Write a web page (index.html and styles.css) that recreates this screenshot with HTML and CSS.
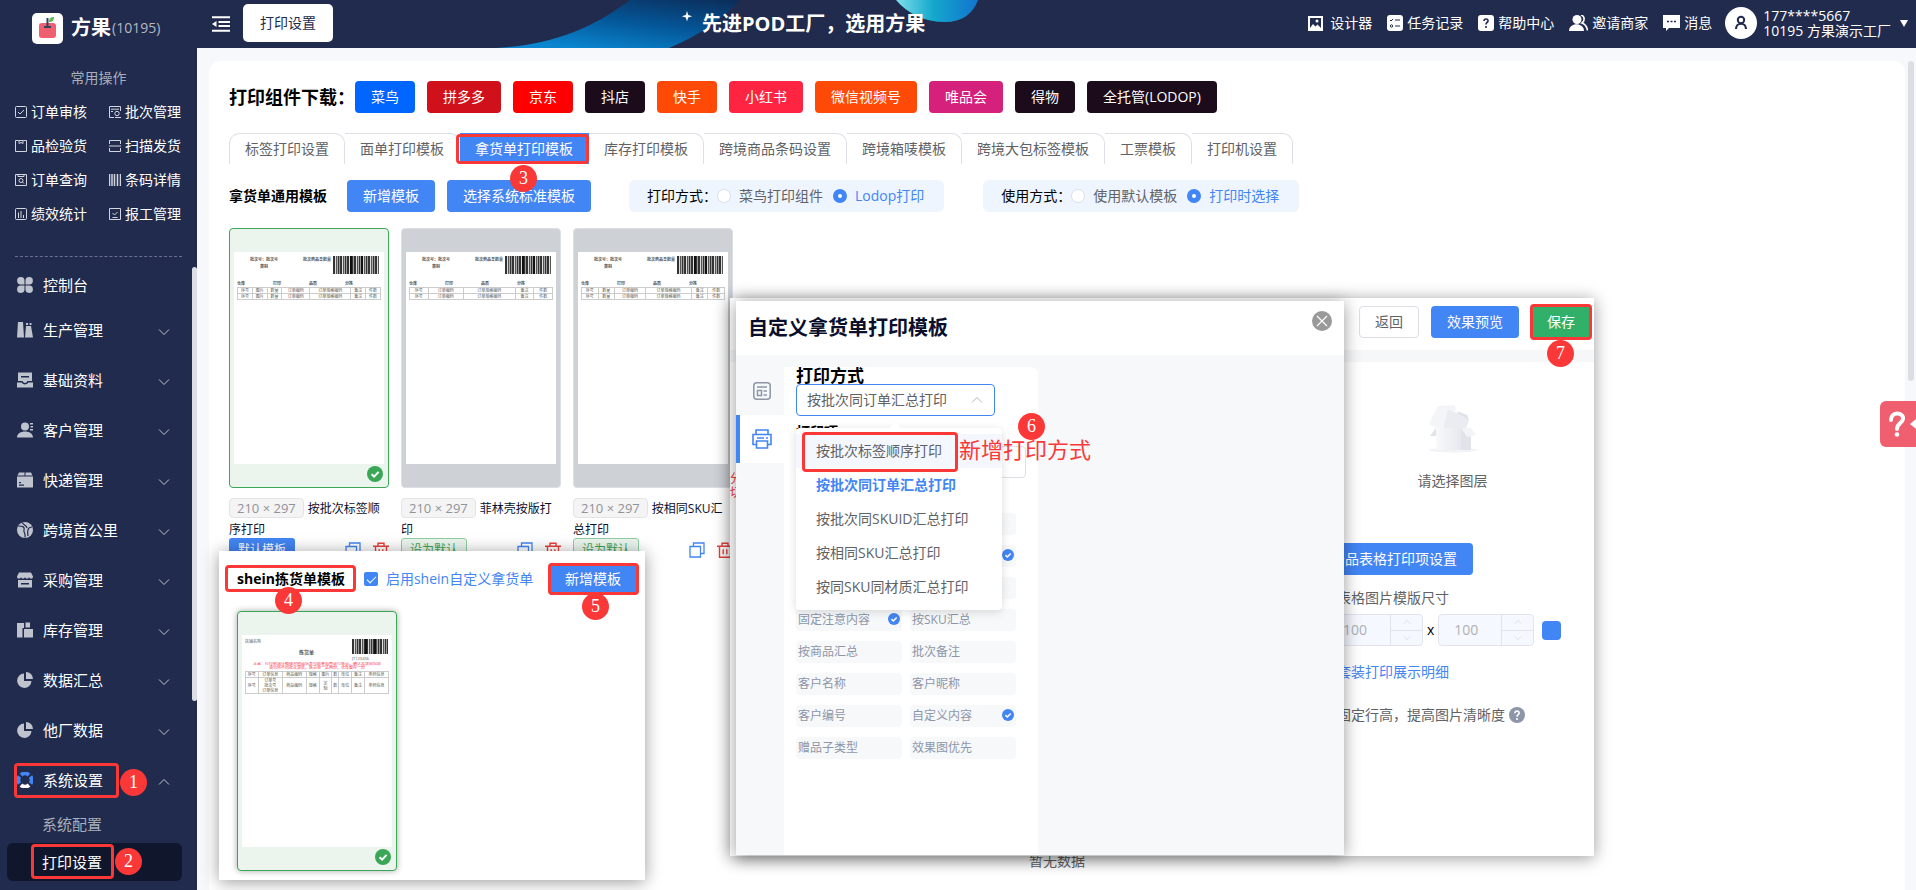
FILE: index.html
```html
<!DOCTYPE html>
<html lang="zh-CN">

<head>
    <meta charset="utf-8">
    <title>打印设置</title>
    <link rel="stylesheet" href="styles.css">
</head>

<body>

    <!-- 图标 -->
    <svg width="0" height="0" class="defs">
        <symbol id="i-down" viewBox="0 0 12 12"><path d="M1 3.5l5 5 5-5" fill="none" stroke="currentColor"/></symbol>
        <symbol id="i-up" viewBox="0 0 12 12"><path d="M1 8.5l5-5 5 5" fill="none" stroke="currentColor"/></symbol>
        <symbol id="i-check" viewBox="0 0 16 16"><circle cx="8" cy="8" r="8" fill="currentColor"/><path d="M4.6 8.2l2.5 2.4 4.5-4.7" fill="none" stroke="#fff" stroke-width="2"/></symbol>
        <symbol id="i-copy" viewBox="0 0 16 16"><path d="M1 4.5h10.500v10.500H1zM4.500 4.500V1H15v10.500h-3.500" fill="none" stroke="currentColor" stroke-width="1.300"/></symbol>
        <symbol id="i-trash" viewBox="0 0 16 16"><path d="M0 4.300h16M5 4V1.200h6V4M2.500 4.500v10.700h11V4.500M6.200 7.300v5M9.800 7.300v5" fill="none" stroke="currentColor" stroke-width="1.400"/></symbol>
        <symbol id="i-pie" viewBox="0 0 16 16"><path d="M7 1.500A7.200 7.200 0 1 0 14.500 9H7z" fill="currentColor"/><path d="M9 0a7 7 0 0 1 7 7H9z" fill="currentColor"/></symbol>
    </svg>

    <div class="sidebar">
        <div class="logo">
            <svg width="31" height="31" viewBox="0 0 31 31"><rect width="31" height="31" rx="5" fill="#fff"/><rect x="7" y="10" width="17" height="15" rx="3" fill="#ef5f70"/><path d="M15.500 5v9M12 14h7" stroke="#34405c" stroke-width="2" fill="none"/><path d="M17 9c0-4 2-5 5-5 0 4-2 5-5 5z" fill="#62b84e"/></svg>
            <b>方果</b><span>(10195)</span>
        </div>
        <div class="often-title">常用操作</div>
        <div class="often">
            <a href="#"><svg viewBox="0 0 12 12"><rect x=".5" y=".5" width="11" height="11" rx="1"/><path d="M3 6l2 2 4-4"/></svg>订单审核</a>
            <a href="#"><svg viewBox="0 0 12 12"><path d="M5 11.500H.500V.500h11V5M2 3.200h8M2 5.500h2"/><circle cx="8" cy="7.500" r="2.200"/><path d="M6 11.500h6"/></svg>批次管理</a>
            <a href="#"><svg viewBox="0 0 12 12"><path d="M3.500.5h-3v11h11V.500h-3M3.500.5h5M4 .500v3l2-1 2 1v-3"/></svg>品检验货</a>
            <a href="#"><svg viewBox="0 0 12 12"><path d="M.500 4V.500h11V4M.500 8v3.500h11V8M0 6h12"/></svg>扫描发货</a>
            <a href="#"><svg viewBox="0 0 12 12"><path d="M.500.5h11v11H.500zM3 .500v2h6v-2"/><circle cx="6" cy="6.500" r="2"/><path d="M7.500 8l1.500 1.500"/></svg>订单查询</a>
            <a href="#"><svg viewBox="0 0 12 12"><path d="M.500 0v12M3 0v12M5.500 0v12M8.500 0v12M11.500 0v12" stroke-width="1.500"/></svg>条码详情</a>
            <a href="#"><svg viewBox="0 0 12 12"><rect x=".5" y=".5" width="11" height="11" rx="1"/><path d="M3.500 4.500V10M6 3v7M8.500 7v3"/></svg>绩效统计</a>
            <a href="#"><svg viewBox="0 0 12 12"><path d="M7 .500H.500v11h11V.500H7M3.500 5l2 2 3-3M3.500 9.500h5"/></svg>报工管理</a>
        </div>
        <div class="menu">
            <a href="#" class="item first"><svg viewBox="0 0 16 16"><path d="M7.500 7.500H4A3.700 3.700 0 1 1 7.500 4zM8.500 7.500V4A3.700 3.700 0 1 1 12 7.500zM7.500 8.500V12A3.700 3.700 0 1 1 4 8.500zM8.500 8.500H12A3.700 3.700 0 1 1 8.500 12z"/></svg>控制台</a>
            <a href="#" class="item"><svg viewBox="0 0 16 16"><path d="M1 0h5l1 15.500H0zM9 4h5l2 11.500H8zM9 1h2v2H9zM12.500 1h2v2h-2z"/></svg>生产管理<svg class="arrow"><use href="#i-down"/></svg></a>
            <a href="#" class="item"><svg viewBox="0 0 16 16"><path fill-rule="evenodd" d="M1 .500h14V9h-4.500c-1 2.600-4 2.600-5 0H1zM4 4v1.500h8V4zM0 10.500h4.500c2 2.600 5 2.600 7 0H16v5H0z"/></svg>基础资料<svg class="arrow"><use href="#i-down"/></svg></a>
            <a href="#" class="item"><svg viewBox="0 0 16 16"><circle cx="8" cy="4.500" r="4"/><path d="M0 15.500c0-8 16-8 16 0zM13 1h3v1.500h-3zM13.500 4H16v1.500h-2.500zM13 7h3v1.500h-3z"/></svg>客户管理<svg class="arrow"><use href="#i-down"/></svg></a>
            <a href="#" class="item"><svg viewBox="0 0 16 16"><path fill-rule="evenodd" d="M2 .500h5.500v3H.500zM8.500.5H14l1.500 3h-7zM0 4.500h16v11H0zM2 10v1.300h2V10zM2 12.500v1.300h5v-1.300z"/></svg>快递管理<svg class="arrow"><use href="#i-down"/></svg></a>
            <a href="#" class="item"><svg viewBox="0 0 16 16"><circle cx="8" cy="8" r="8"/><path d="M1 4c5 0 7 1 6 4-1 2 2 3 1 7.500M5 .500c2 3 5 3 5 5.500M15 5c-4 0-5 3-4 9" fill="none" stroke="#212b4d" stroke-width="1.200"/></svg>跨境首公里<svg class="arrow"><use href="#i-down"/></svg></a>
            <a href="#" class="item"><svg viewBox="0 0 16 16"><path fill-rule="evenodd" d="M2 .500h12l2 4c0 2.800-3.500 2.800-4 .5-.500 2.300-3.500 2.300-4 0-.500 2.300-3.500 2.300-4 0-.500 2.300-4 2.300-4-.500zM1 8h14v7.500H1zM4 11v1.500h8V11z"/></svg>采购管理<svg class="arrow"><use href="#i-down"/></svg></a>
            <a href="#" class="item"><svg viewBox="0 0 16 16"><path d="M0 1h7v5H5.500v9.500H0zM8.500.5H13v5H8.500zM7 7h9v8.500H7z"/></svg>库存管理<svg class="arrow"><use href="#i-down"/></svg></a>
            <a href="#" class="item"><svg><use href="#i-pie"/></svg>数据汇总<svg class="arrow"><use href="#i-down"/></svg></a>
            <a href="#" class="item"><svg><use href="#i-pie"/></svg>他厂数据<svg class="arrow"><use href="#i-down"/></svg></a>
            <a href="#" class="item"><svg viewBox="0 0 16 16"><g fill="none" stroke="#4285f4" stroke-width="4"><path d="M4 3a6 6 0 0 1 8 0M2.500 11.500a6 6 0 0 1 0-7M13.500 4.500a6 6 0 0 1 0 7"/><path d="M4 13a6 6 0 0 0 8 0" stroke="#fff"/></g></svg>系统设置<svg class="arrow"><use href="#i-up"/></svg><i class="frame frame-1"></i><i class="num num-1">1</i></a>
            <a href="#" class="sub">系统配置</a>
            <a href="#" class="sub active">打印设置<i class="frame frame-2"></i><i class="num num-2">2</i></a>
        </div>
        <div class="side-thumb"></div>
    </div>

    <div class="right">
        <div class="header">
            <svg class="banner" width="520" height="48" viewBox="0 0 520 48">
                <defs>
                    <linearGradient id="g1" x1="1" y1="0" x2="0.300" y2="1"><stop offset="0" stop-color="#0c2c58"/><stop offset=".5" stop-color="#045596"/><stop offset="1" stop-color="#0a86d0"/></linearGradient>
                    <linearGradient id="g2" x1="0" y1="0" x2="1" y2="0"><stop offset="0" stop-color="#7ee0ea"/><stop offset=".45" stop-color="#14a8cc"/><stop offset="1" stop-color="#1273cf"/></linearGradient>
                </defs>
                <path d="M36 48C90 45 130 30 170 0H280C262 20 240 35 209 48z" fill="url(#g1)"/>
                <path d="M436 0C448 14 464 22 485 22 502 22 513 14 518 0z" fill="url(#g2)"/>
                <path d="M227 11l1.200 4 4 1.200-4 1.200-1.200 4-1.200-4-4-1.200 4-1.200z" fill="#fff"/>
            </svg>
            <button class="fold" aria-label="收起菜单"><svg width="18" height="16" viewBox="0 0 18 16"><path d="M0 1.200h18M6.500 6h11.500M6.500 10h11.500M0 14.800h18" stroke="#fff" stroke-width="2"/><path d="M0 8l4.500-3v6z" fill="#fff"/></svg></button>
            <a href="#" class="page-tab">打印设置</a>
            <div class="slogan">先进POD工厂，选用方果</div>
            <div class="tools">
                <a href="#" class="designer"><svg width="15" height="15" viewBox="0 0 15 15"><path fill-rule="evenodd" d="M0 0h15v15H0zM2 2v10l3-4 2.500 2.500 2-2L13 12V2z" fill="#fff"/><circle cx="9" cy="5" r="1.500" fill="#fff"/></svg>设计器</a>
                <a href="#"><svg width="16" height="16" viewBox="0 0 16 16"><rect width="16" height="16" rx="3" fill="#fff"/><path d="M8 5h5M8 11h5M3 5l1 1 2-2" stroke="#212b4d" fill="none"/><circle cx="4.500" cy="11" r="1.200" stroke="#212b4d" fill="none"/></svg>任务记录</a>
                <a href="#"><svg width="16" height="16" viewBox="0 0 16 16"><rect width="16" height="16" rx="3" fill="#fff"/><path d="M6 6c0-3 4.500-2.500 4 0-.300 1.500-2 1.500-2 3.500M8 11v2" stroke="#212b4d" stroke-width="1.600" fill="none"/></svg>帮助中心</a>
                <a href="#"><svg width="19" height="16" viewBox="0 0 19 16"><circle cx="8" cy="4.500" r="4.500" fill="#fff"/><path d="M0 16c0-9 15-9 15 0z" fill="#fff"/><path d="M12 0c4 1 4 6 1 8 3 1 5 4 5.500 7.500" stroke="#fff" stroke-width="1.600" fill="none"/></svg>邀请商家</a>
                <a href="#"><svg width="17" height="16" viewBox="0 0 17 16"><path d="M0 0h17v13H6l-3 3v-3H0z" fill="#fff"/><path d="M4 6.500h2M7.500 6.500h2M11 6.500h2" stroke="#212b4d" stroke-width="1.500"/></svg>消息</a>
            </div>
            <div class="user">
                <svg width="32" height="32" viewBox="0 0 32 32"><circle cx="16" cy="16" r="16" fill="#fff"/><circle cx="16" cy="13" r="3.200" fill="none" stroke="#212b4d" stroke-width="2"/><path d="M11 22c0-7 10-7 10 0" fill="none" stroke="#212b4d" stroke-width="2.200"/></svg>
                <div>177****5667<br>10195 方果演示工厂</div>
                <svg class="caret" width="8" height="7" viewBox="0 0 8 7"><path d="M0 0h8L4 7z" fill="#fff"/></svg>
            </div>
        </div>

        <div class="content">
            <div class="downloads">
                <h1>打印组件下载：</h1>
                <button class="btn cainiao">菜鸟</button>
                <button class="btn pdd">拼多多</button>
                <button class="btn jd">京东</button>
                <button class="btn dark">抖店</button>
                <button class="btn orange">快手</button>
                <button class="btn xhs">小红书</button>
                <button class="btn orange">微信视频号</button>
                <button class="btn vip">唯品会</button>
                <button class="btn dark">得物</button>
                <button class="btn dark">全托管(LODOP)</button>
            </div>

            <div class="tabs">
                <a href="#">标签打印设置</a>
                <a href="#" class="plain">面单打印模板</a>
                <a href="#" class="on">拿货单打印模板<i class="frame"></i><i class="num num-3">3</i></a>
                <a href="#">库存打印模板</a>
                <a href="#">跨境商品条码设置</a>
                <a href="#">跨境箱唛模板</a>
                <a href="#">跨境大包标签模板</a>
                <a href="#">工票模板</a>
                <a href="#">打印机设置</a>
            </div>

            <div class="options">
                <h2>拿货单通用模板</h2>
                <button class="btn">新增模板</button>
                <button class="btn">选择系统标准模板</button>
                <div class="radios">
                    打印方式：
                    <label><input type="radio" name="way">菜鸟打印组件</label>
                    <label><input type="radio" name="way" checked>Lodop打印</label>
                </div>
                <div class="radios">
                    使用方式：
                    <label><input type="radio" name="use">使用默认模板</label>
                    <label><input type="radio" name="use" checked>打印时选择</label>
                </div>
            </div>

            <div class="cards">
                <div class="card">
                    <div class="thumb chosen">
                        <div class="paper">
                            <div class="paper-top"><span>批次号：批次号<br>类别</span><span>批次商品总数量</span><i class="barcode"></i></div>
                            <div class="paper-cols"><b>仓库</b><b>打印</b><b>品质</b><b>分拣</b></div>
                            <table>
                                <tr><td>序号</td><td>图片</td><td>数量</td><td>订单编码</td><td>订单规格编码</td><td>备注</td><td>件数</td></tr>
                                <tr><td>序号</td><td>图片</td><td>数量</td><td>订单编码</td><td>订单规格编码</td><td>备注</td><td>件数</td></tr>
                            </table>
                        </div>
                        <svg class="ok"><use href="#i-check"/></svg>
                    </div>
                    <div class="name"><span class="size">210 × 297</span>按批次标签顺序打印</div>
                    <div class="acts"><button class="mini">默认模板</button><svg class="copy"><use href="#i-copy"/></svg><svg class="trash"><use href="#i-trash"/></svg></div>
                </div>
                <div class="card">
                    <div class="thumb">
                        <div class="paper">
                            <div class="paper-top"><span>批次号：批次号<br>类别</span><span>批次商品总数量</span><i class="barcode"></i></div>
                            <div class="paper-cols"><b>仓库</b><b>打印</b><b>品质</b><b>分拣</b></div>
                            <table>
                                <tr><td>序号</td><td>订单编码</td><td>订单规格编码</td><td>备注</td><td>件数</td></tr>
                                <tr><td>序号</td><td>订单编码</td><td>订单规格编码</td><td>备注</td><td>件数</td></tr>
                            </table>
                        </div>
                    </div>
                    <div class="name"><span class="size">210 × 297</span>菲林壳按版打印</div>
                    <div class="acts"><button class="mini green">设为默认</button><svg class="copy"><use href="#i-copy"/></svg><svg class="trash"><use href="#i-trash"/></svg></div>
                </div>
                <div class="card">
                    <div class="thumb">
                        <div class="paper">
                            <div class="paper-top"><span>批次号：批次号<br>类别</span><span>批次商品总数量</span><i class="barcode"></i></div>
                            <div class="paper-cols"><b>仓库</b><b>打印</b><b>品质</b><b>分拣</b></div>
                            <table>
                                <tr><td>序号</td><td>数量</td><td>订单编码</td><td>订单规格编码</td><td>备注</td><td>件数</td></tr>
                                <tr><td>序号</td><td>数量</td><td>订单编码</td><td>订单规格编码</td><td>备注</td><td>件数</td></tr>
                            </table>
                        </div>
                    </div>
                    <div class="name"><span class="size">210 × 297</span>按相同SKU汇总打印</div>
                    <div class="acts"><button class="mini green">设为默认</button><svg class="copy"><use href="#i-copy"/></svg><svg class="trash"><use href="#i-trash"/></svg></div>
                </div>
            </div>

            <div class="nodata">暂无数据</div>
        </div>
        <div class="page-thumb"></div>
    </div>

    <!-- shein 模板 -->
    <div class="win shein">
        <div class="shein-head">
            <h2>shein拣货单模板<i class="frame frame-4"></i><i class="num num-4">4</i></h2>
            <label><input type="checkbox" checked>启用shein自定义拿货单</label>
            <button class="btn">新增模板<i class="frame"></i><i class="num num-5">5</i></button>
        </div>
        <div class="thumb chosen raised">
            <div class="paper">
                <div class="shein-top"><span>店铺名称</span><b>拣货单</b><div><i class="barcode"></i>JT123456</div></div>
                <p>注意：打印前请仔细核对商品信息与数量后再进行拣货，确认无误后包装<br>请勿将不同批次混装，拣货单一式两份，仓库留存一份</p>
                <table>
                    <tr><td>序号</td><td>订单信息</td><td>商品编码</td><td>规格</td><td>图片</td><td>数</td><td>库位</td><td>备注</td><td>条码信息</td></tr>
                    <tr><td>序号</td><td>订单号<br>批次号<br>订单信息</td><td>商品编码</td><td>规格</td><td>定<br>制</td><td>数</td><td>库位</td><td>备注</td><td>条码信息</td></tr>
                </table>
            </div>
            <svg class="ok"><use href="#i-check"/></svg>
        </div>
    </div>

    <!-- 模板编辑 -->
    <div class="win editor">
        <div class="editor-head">
            <button class="btn white">返回</button>
            <button class="btn">效果预览</button>
            <button class="btn save">保存<i class="frame"></i><i class="num num-7">7</i></button>
        </div>
        <div class="editor-body">
            <div class="warn">分<br>切</div>
            <div class="props">
                <div class="empty">
                    <svg width="50" height="50" viewBox="0 0 50 50">
                        <defs><linearGradient id="g3"><stop offset="0" stop-color="#f8f9fb"/><stop offset="1" stop-color="#e6e8ee"/></linearGradient></defs>
                        <ellipse cx="25" cy="46" rx="24" ry="2.500" fill="#f2f3f7"/>
                        <path d="M10 2l16-1 2 4-10 19H8l-7-4z" fill="#f4f5f8"/>
                        <path d="M20 6l10 3 7 2 4 6-4 9-6 4H14z" fill="#eaecf1"/><path d="M29 7l10 4 2 5-10-6z" fill="#dfe2e8"/>
                        <path d="M8 24v8H2z" fill="#e1e3e9"/><path d="M8 24h26v22H8z" fill="url(#g3)"/>
                        <path d="M33 24h10v22H33z" fill="#e0e3e9"/><path d="M33 24h10l5 7-9 2z" fill="#f3f4f8"/>
                    </svg>
                    <div>请选择图层</div>
                </div>
                <button class="btn">产品表格打印项设置</button>
                <div class="prop">表格图片模版尺寸</div>
                <div class="sizes">
                    <div class="stepper"><input type="text" value="100" aria-label="宽" disabled><div><button disabled aria-label="增加"><svg><use href="#i-up"/></svg></button><button disabled aria-label="减少"><svg><use href="#i-down"/></svg></button></div></div>
                    x
                    <div class="stepper"><input type="text" value="100" aria-label="高" disabled><div><button disabled aria-label="增加"><svg><use href="#i-up"/></svg></button><button disabled aria-label="减少"><svg><use href="#i-down"/></svg></button></div></div>
                    <i class="swatch"></i>
                </div>
                <div class="prop blue">套装打印展示明细</div>
                <div class="prop last">固定行高，提高图片清晰度<svg width="16" height="16" viewBox="0 0 16 16"><circle cx="8" cy="8" r="8" fill="#8d96a8"/><path d="M5.800 6.300c0-3.200 4.700-2.800 4.300 0C9.800 7.800 8 7.800 8 9.800M8 11v2" stroke="#fff" stroke-width="1.600" fill="none"/></svg></div>
            </div>
        </div>
    </div>

    <div class="win custom">
        <div class="custom-head">
            <h1>自定义拿货单打印模板</h1>
            <button aria-label="关闭"><svg width="20" height="20" viewBox="0 0 20 20"><circle cx="10" cy="10" r="10" fill="#999"/><path d="M5 5l10 10M15 5L5 15" stroke="#fff" stroke-width="1.200"/></svg></button>
        </div>
        <div class="custom-body">
            <div class="icons">
                <a href="#"><svg width="18" height="18" viewBox="0 0 18 18" fill="none" stroke="#8d96a8" stroke-width="1.500"><rect x=".8" y=".8" width="16.400" height="16.400" rx="3"/><path d="M4 5h10M4.500 8.500h4v5h-4zM10.500 9H14M10.500 13H14"/></svg></a>
                <a href="#" class="on"><svg width="20" height="20" viewBox="0 0 20 20" fill="none" stroke="#4285f4" stroke-width="1.600"><path d="M4 5.500V1h12v4.500M4.500 15.500H1v-10h18v10h-3.500M4.500 12h11v7h-11zM5 9h7M14 9h2"/></svg></a>
            </div>
            <div class="form">
                <h2>打印方式</h2>
                <button class="select">按批次同订单汇总打印<svg><use href="#i-up"/></svg></button>
                <h3>打印项</h3>
                <div class="search"></div>
                <div class="fields">
                    <span></span><span></span>
                    <span></span><span><svg><use href="#i-check"/></svg></span>
                    <span></span><span></span>
                    <span>固定注意内容<svg><use href="#i-check"/></svg></span><span>按SKU汇总</span>
                    <span>按商品汇总</span><span>批次备注</span>
                    <span>客户名称</span><span>客户昵称</span>
                    <span>客户编号</span><span>自定义内容<svg><use href="#i-check"/></svg></span>
                    <span>赠品子类型</span><span>效果图优先</span>
                </div>
                <ul class="dropdown">
                    <li class="hover">按批次标签顺序打印<i class="frame frame-6"></i><em>新增打印方式</em><i class="num num-6">6</i></li>
                    <li class="picked">按批次同订单汇总打印</li>
                    <li>按批次同SKUID汇总打印</li>
                    <li>按相同SKU汇总打印</li>
                    <li>按同SKU同材质汇总打印</li>
                </ul>
            </div>
        </div>
    </div>

    <button class="help" aria-label="帮助">
        <svg width="36" height="46" viewBox="0 0 36 46"><path d="M11 19c0-9 13-8 12-1-.500 4-6 4.500-6 10" fill="none" stroke="#fff" stroke-width="4" stroke-linecap="round"/><circle cx="17" cy="33.500" r="2.300" fill="#fff"/><path d="M30 23l6-5v10z" fill="#fff"/></svg>
    </button>

</body>

</html>
```

FILE: styles.css
```css
* {
    box-sizing: border-box;
}
html, body {
    height: 100%;
}
body {
    margin: 0;
    display: flex;
    position: relative;
    overflow: hidden;
    background: #f6f8fc;
    font-family: "Open Sans", "Noto Sans CJK SC", sans-serif;
    font-size: 14px;
    line-height: 20px;
    color: #000;
}
a {
    color: inherit;
    text-decoration: none;
}
button, input {
    font: inherit;
    margin: 0;
}
button {
    border: 0;
    padding: 0;
    background: none;
}
h1, h2, h3, p, ul {
    margin: 0;
    padding: 0;
}
i, em {
    font-style: normal;
}
svg {
    flex: none;
}
.defs {
    position: absolute;
}

/* 红框和序号 */
.frame {
    position: absolute;
    inset: -2px;
    border: 3px solid #fb3838;
    border-radius: 4px;
}
.num {
    position: absolute;
    z-index: 5;
    width: 27px;
    height: 27px;
    border-radius: 50%;
    background: #fb3838;
    color: #fff;
    font: 18px/27px "Liberation Serif", serif;
    text-align: center;
}

/* 左侧菜单 */
.sidebar {
    position: relative;
    flex: none;
    width: 197px;
    background: #212b4d;
    color: #fff;
}
.logo {
    display: flex;
    align-items: center;
    height: 48px;
    padding: 8px 0 0 32px;
}
.logo b {
    margin-left: 8px;
    font-size: 20px;
}
.logo span {
    margin-left: 1px;
    font-size: 14px;
    color: #b4b8c4;
}
.often-title {
    margin-top: 20px;
    text-align: center;
    color: #a9aebb;
}
.often {
    display: grid;
    grid-template-columns: 94px 1fr;
    margin: 7px 15px 0;
    padding-bottom: 25px;
    border-bottom: 1px dashed #6a7290;
}
.often a {
    display: flex;
    align-items: center;
    gap: 4px;
    height: 34px;
    white-space: nowrap;
}
.often svg {
    width: 12px;
    height: 12px;
    fill: none;
    stroke: #d3d6de;
}
.menu {
    padding-top: 8px;
    font-size: 15px;
}
.item {
    position: relative;
    display: flex;
    align-items: center;
    gap: 10px;
    height: 50px;
    padding: 0 27px 0 17px;
}
.first {
    height: 40px;
}
.item svg {
    width: 16px;
    height: 16px;
    color: #bfc3ce;
    fill: #bfc3ce;
}
.item .arrow {
    width: 12px;
    height: 12px;
    margin: 4px 0 0 auto;
}
.sub {
    position: relative;
    display: block;
    height: 38px;
    margin: 0 15px 0 7px;
    padding-left: 35px;
    line-height: 38px;
    color: #a9aebb;
}
.sub.active {
    border-radius: 6px;
    background: #10162c;
    color: #fff;
}
.side-thumb {
    position: absolute;
    top: 30%;
    right: 0;
    width: 5px;
    height: 434px;
    border-radius: 3px;
    background: #dcdee7;
}
.frame-1 {
    inset: 8px 78px 7px 14px;
}
.num-1 {
    left: 120px;
    top: 14px;
}
.frame-2 {
    inset: 1px 68px 2px 24px;
}
.num-2 {
    left: 108px;
    top: 5px;
}

/* 顶部 */
.right {
    position: relative;
    flex: 1;
    display: flex;
    flex-direction: column;
    min-width: 0;
}
.header {
    position: relative;
    flex: none;
    display: flex;
    align-items: center;
    height: 48px;
    padding: 0 8px 0 15px;
    background: #212b4d;
    color: #fff;
}
.banner {
    position: absolute;
    left: 263px;
    top: 0;
}
.fold {
    height: 16px;
    line-height: 0;
}
.page-tab {
    margin: -2px 0 0 13px;
    padding: 9px 17px;
    border-radius: 5px;
    background: #fff;
    color: #212b4d;
}
.slogan {
    position: relative;
    margin-left: 369px;
    font-size: 20px;
    font-weight: bold;
    line-height: 24px;
}
.tools {
    display: flex;
    gap: 15px;
    margin: -2px 0 0 auto;
}
.tools a {
    display: flex;
    align-items: center;
    gap: 4px;
}
.tools .designer {
    gap: 7px;
}
.user {
    display: flex;
    align-items: center;
    margin: -2px 0 0 13px;
    line-height: 15px;
}
.user div {
    margin-left: 6px;
}
.caret {
    margin-left: 9px;
}

/* 内容 */
.content {
    flex: 1;
    margin: 13px 11px 0 12px;
    padding: 20px;
    border-radius: 12px 12px 0 0;
    background: #fff;
    overflow: hidden;
}
.page-thumb {
    position: absolute;
    top: 61px;
    right: 2px;
    width: 6px;
    height: 320px;
    border-radius: 3px;
    background: #dddee3;
}
.downloads {
    display: flex;
    align-items: center;
    gap: 12px;
}
.downloads h1 {
    width: 114px;
    font-size: 18px;
    white-space: nowrap;
}
.btn {
    position: relative;
    height: 32px;
    padding: 0 16px;
    border-radius: 4px;
    background: #4285f4;
    color: #fff;
    white-space: nowrap;
}
.cainiao { background: #0066ff; }
.pdd { background: #d0111b; }
.jd { background: #ff0000; }
.dark { background: #1c0b1a; }
.orange { background: #ff4906; }
.xhs { background: #ff2442; }
.vip { background: #d6217c; }
.save { background: #30b068; }
.white {
    border: 1px solid #dcdfe6;
    padding: 0 15px;
    background: #fff;
    color: #606266;
}
.tabs {
    display: flex;
    width: max-content;
    margin-top: 20px;
    border-left: 1px solid #dcdfe6;
    border-radius: 10px 0 0 0;
    color: #606266;
}
.tabs a {
    position: relative;
    height: 31px;
    padding: 0 15px;
    border-top: 1px solid #dcdfe6;
    border-right: 1px solid #dcdfe6;
    border-radius: 0 10px 0 0;
    line-height: 30px;
}
.tabs a:first-child {
    border-radius: 10px 10px 0 0;
}
.tabs .plain {
    border-right-color: transparent;
}
.tabs .on {
    border-color: #4285f4;
    border-radius: 0;
    background: #4285f4;
    color: #fff;
}
.tabs .frame {
    inset: 0 -1px 0 -4px;
}
.num-3 {
    left: 50px;
    top: 31px;
}
.options {
    display: flex;
    align-items: center;
    gap: 12px;
    margin-top: 16px;
}
.options h2 {
    margin-right: 8px;
    font-size: 14px;
}
.radios {
    display: flex;
    align-items: center;
    height: 32px;
    margin-left: 26px;
    padding: 0 20px 0 18px;
    border-radius: 6px;
    background: #eef5ff;
    white-space: nowrap;
}
.radios + .radios {
    margin-left: 27px;
}
.radios label {
    display: flex;
    align-items: center;
    gap: 8px;
    margin-right: 10px;
    color: #606266;
}
.radios label:last-child {
    margin-right: 0;
    color: #4285f4;
}
input[type=radio] {
    appearance: none;
    width: 14px;
    height: 14px;
    border: 1px solid #dcdfe6;
    border-radius: 50%;
    background: #fff;
}
input[type=radio]:checked {
    border: 5px solid #4285f4;
}

/* 模板卡片 */
.cards {
    display: flex;
    gap: 12px;
    margin-top: 16px;
}
.card {
    width: 160px;
}
.thumb {
    position: relative;
    width: 160px;
    height: 260px;
    padding: 23px 4px;
    border: 1px solid #dcdfe6;
    border-radius: 4px;
    background: #ced1d6;
}
.thumb.chosen {
    border-color: #3aa757;
    background: #ebf5ed;
}
.raised {
    box-shadow: 0 0 6px rgba(0, 0, 0, .35);
}
.ok {
    position: absolute;
    right: 5px;
    bottom: 5px;
    width: 16px;
    height: 16px;
    color: #3aa757;
}
.paper {
    height: 212px;
    padding: 4px 3px;
    background: #fff;
    color: #555;
    font-size: 4px;
    line-height: 6px;
    overflow: hidden;
}
.paper-top {
    display: grid;
    grid-template-columns: 54px 38px 46px;
    gap: 2px;
    height: 25px;
    text-align: center;
    line-height: 7px;
    font-weight: bold;
    white-space: nowrap;
}
.paper-top span + span {
    text-align: right;
}
.barcode {
    display: block;
    height: 18px;
    background:
        linear-gradient(90deg, transparent 36%, #111 36% 42%, transparent 42% 60%, #111 60% 66%, transparent 66%),
        repeating-linear-gradient(90deg, #333 0 2px, #ddd 2px 3px, #555 3px 4px, #aaa 4px 5px, #333 5px 6px, #999 6px 7px);
}
.paper-cols {
    display: grid;
    grid-template-columns: repeat(4, 36px);
}
.paper table {
    width: 100%;
    border-collapse: collapse;
}
.paper td {
    padding: 0;
    border: 1px solid #ccc;
    line-height: 5px;
    text-align: center;
    white-space: nowrap;
}
.name {
    margin-top: 10px;
    font-size: 12px;
    line-height: 21px;
    color: #0a0f2c;
}
.size {
    display: inline-block;
    height: 20px;
    margin-right: 4px;
    padding: 0 7px;
    border: 1px solid #e4e4e6;
    border-radius: 4px;
    background: #f4f4f5;
    color: #909399;
    font-size: 13px;
    line-height: 19px;
    vertical-align: top;
}
.acts {
    display: flex;
    align-items: center;
    gap: 12px;
    margin-top: -2px;
    color: #4285f4;
}
.mini {
    width: 66px;
    height: 24px;
    margin-right: auto;
    border-radius: 3px;
    background: #4285f4;
    color: #fff;
    font-size: 12px;
}
.mini.green {
    border: 1px solid #8fcfa2;
    background: #ebf5ed;
    color: #3aa757;
}
.acts svg {
    width: 16px;
    height: 16px;
}
.trash {
    color: #e8403a;
}
.nodata {
    margin-top: 289px;
    text-align: center;
    color: #606266;
}

/* 浮层 */
.win {
    position: absolute;
    background: #fff;
    box-shadow: 0 2px 16px rgba(0, 0, 0, .4);
}
.shein {
    left: 219px;
    top: 551px;
    width: 426px;
    padding: 12px 8px 9px 18px;
}
.shein-head {
    display: flex;
    align-items: center;
    margin-bottom: 16px;
}
.shein h2 {
    position: relative;
    font-size: 14px;
}
.shein label {
    display: flex;
    align-items: center;
    gap: 8px;
    margin-left: 19px;
    color: #4285f4;
}
.shein .btn {
    margin-left: auto;
}
.shein .btn .frame {
    inset: 0 -2px 0 -1px;
}
.frame-4 {
    inset: -4px -11px -3px -12px;
}
.num-4 {
    left: 38px;
    top: 18px;
}
.num-5 {
    left: 33px;
    top: 30px;
}
input[type=checkbox] {
    appearance: none;
    width: 14px;
    height: 14px;
    border-radius: 2px;
    background: #4285f4;
}
input[type=checkbox]::after {
    content: "";
    display: block;
    width: 4px;
    height: 8px;
    margin: 2px 0 0 5px;
    border: solid #fff;
    border-width: 0 1px 1px 0;
    transform: rotate(45deg);
}
.shein-top {
    display: grid;
    grid-template-columns: 54px 53px 36px;
    height: 23px;
}
.shein-top b {
    margin-top: 10px;
    font-size: 5px;
}
.shein-top .barcode {
    height: 15px;
    margin-bottom: 2px;
}
.paper p {
    height: 9px;
    overflow: hidden;
    color: #fb3838;
    font-size: 4px;
    line-height: 4px;
    text-align: center;
    white-space: nowrap;
}

.editor {
    left: 730px;
    top: 298px;
    width: 864px;
    height: 558px;
}
.editor-head {
    display: flex;
    justify-content: flex-end;
    gap: 12px;
    height: 52px;
    padding: 8px 3px;
}
.editor-head .frame {
    inset: -2px -1px;
}
.num-7 {
    left: 16px;
    top: 34px;
}
.editor-body {
    display: flex;
    justify-content: space-between;
    border-top: 12px solid #f6f7f9;
}
.warn {
    width: 6px;
    margin-top: 110px;
    overflow: hidden;
    color: #fb3838;
    font-size: 12px;
    line-height: 14px;
}
.props {
    width: 279px;
    color: #606266;
}
.empty {
    margin: 42px 0 52px;
    padding-right: 4px;
    text-align: center;
}
.empty svg {
    display: block;
    margin: 0 auto 17px;
}
.prop {
    display: flex;
    align-items: center;
    gap: 4px;
    margin: 13px 0 6px 22px;
}
.blue {
    margin-top: 16px;
    color: #4285f4;
}
.last {
    margin-top: 23px;
}
.sizes {
    display: flex;
    align-items: center;
    gap: 4px;
    margin-left: 12px;
    color: #000;
}
.stepper {
    display: flex;
    width: 96px;
    height: 32px;
    border: 1px solid #e1e4ee;
    border-radius: 4px;
    background: #f5f8fe;
}
.stepper input {
    width: 62px;
    padding: 0 0 0 15px;
    border: 0;
    background: none;
    color: #adb0b8;
}
.stepper div {
    flex: 1;
    display: grid;
    border-left: 1px solid #e1e4ee;
}
.stepper button {
    line-height: 0;
    color: #d0d4de;
}
.stepper button + button {
    border-top: 1px solid #e1e4ee;
}
.stepper svg {
    width: 8px;
    height: 8px;
}
.swatch {
    width: 19px;
    height: 19px;
    margin-left: 4px;
    border-radius: 4px;
    background: #4285f4;
}

.custom {
    left: 736px;
    top: 301px;
    width: 608px;
    height: 554px;
    display: flex;
    flex-direction: column;
}
.custom-head {
    display: flex;
    justify-content: space-between;
    height: 54px;
    padding: 10px 12px 0;
    line-height: 34px;
    color: #0a0f2c;
}
.custom-head h1 {
    font-size: 20px;
}
.custom-head button {
    height: 20px;
    line-height: 0;
}
.custom-body {
    flex: 1;
    display: flex;
    padding-top: 12px;
    background: #f6f8fa;
}
.icons {
    width: 48px;
}
.icons a {
    display: flex;
    align-items: center;
    height: 48px;
    padding: 0 0 0 17px;
}
.icons .on {
    border-left: 4px solid #4285f4;
    padding-left: 12px;
    background: #fff;
}
.form {
    position: relative;
    width: 254px;
    padding: 0 12px;
    border-radius: 0 8px 0 0;
    background: #fff;
}
.form h2 {
    height: 17px;
    font-size: 17px;
    line-height: 18px;
}
.select {
    display: flex;
    align-items: center;
    justify-content: space-between;
    width: 199px;
    height: 32px;
    padding: 0 11px 0 10px;
    border: 1px solid #4285f4;
    border-radius: 4px;
    color: #606266;
}
.select svg {
    width: 12px;
    height: 12px;
    color: #b4b8c0;
}
.form h3 {
    margin-top: 6px;
    font-size: 14px;
    line-height: 20px;
}
.search {
    width: 230px;
    height: 32px;
    margin: 4px 0 35px;
    border: 1px solid #dcdfe6;
    border-radius: 4px;
}
.fields {
    display: grid;
    grid-template-columns: 106px 106px;
    gap: 10px 8px;
    font-size: 12px;
    color: #8d96a8;
}
.fields span {
    display: flex;
    justify-content: space-between;
    height: 22px;
    padding: 0 2px;
    border-radius: 4px;
    background: #f6f8fa;
    line-height: 22px;
}
.fields svg {
    width: 12px;
    height: 12px;
    margin: 4px 0 0 auto;
    color: #4285f4;
}
.dropdown {
    position: absolute;
    left: 12px;
    top: 61px;
    width: 206px;
    padding: 6px 0;
    border-radius: 4px;
    background: #fff;
    box-shadow: 0 2px 10px rgba(0, 0, 0, .14);
    list-style: none;
    color: #606266;
}
.dropdown::before {
    content: "";
    position: absolute;
    left: 95px;
    top: -4px;
    width: 8px;
    height: 8px;
    background: #fff;
    transform: rotate(45deg);
}
.dropdown li {
    position: relative;
    height: 34px;
    padding-left: 20px;
    line-height: 34px;
}
.dropdown .hover {
    background: #f4f7fe;
}
.dropdown .picked {
    color: #4285f4;
    font-weight: bold;
}
.frame-6 {
    inset: -2px 44px -4px 6px;
}
.dropdown em {
    position: absolute;
    left: 163px;
    top: -2px;
    color: #fb3838;
    font-size: 22px;
    white-space: nowrap;
}
.num-6 {
    left: 222px;
    top: -21px;
}

.help {
    position: absolute;
    right: 0;
    top: 401px;
    width: 36px;
    height: 46px;
    border-radius: 6px 0 0 6px;
    background: #ef5f70;
    line-height: 0;
}
```
